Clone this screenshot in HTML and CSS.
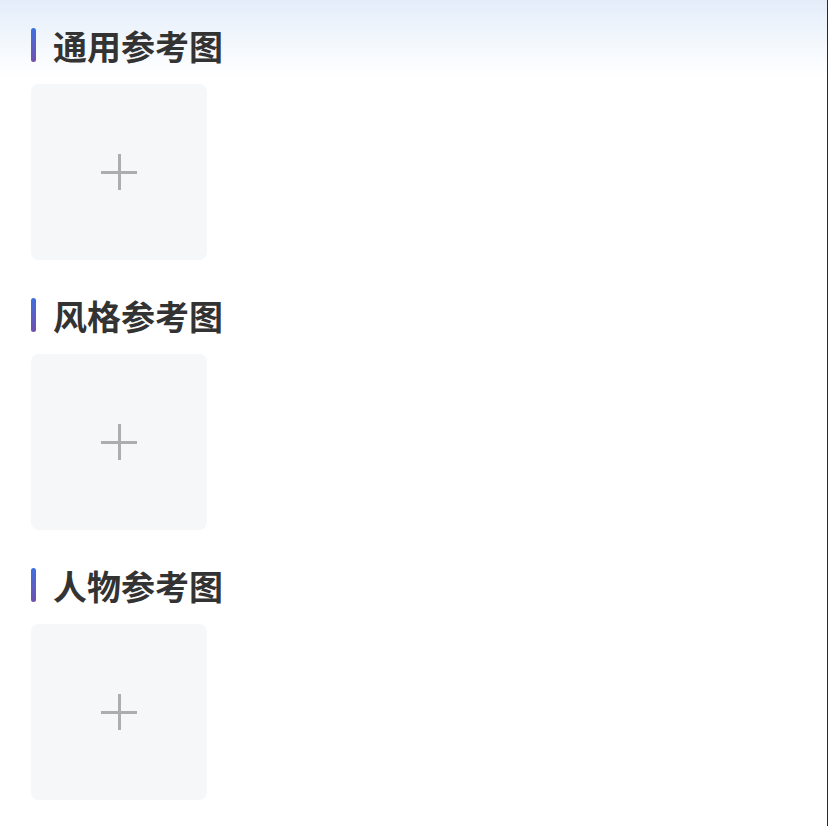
FILE: index.html
```html
<!DOCTYPE html>
<html lang="zh-CN">
<head>
<meta charset="utf-8">
<link rel="stylesheet" href="styles.css">
</head>
<body>
<div class="page">
  <section class="group">
    <h2 class="title"><span class="bar"></span><span class="label">通用参考图</span></h2>
    <div class="upload"><span class="plus"></span></div>
  </section>
  <section class="group">
    <h2 class="title"><span class="bar"></span><span class="label">风格参考图</span></h2>
    <div class="upload"><span class="plus"></span></div>
  </section>
  <section class="group">
    <h2 class="title"><span class="bar"></span><span class="label">人物参考图</span></h2>
    <div class="upload"><span class="plus"></span></div>
  </section>
</div>
</body>
</html>
```
FILE: styles.css
```css
html, body {
  margin: 0;
  padding: 0;
  background: #ffffff;
}
.page {
  width: 828px;
  min-height: 826px;
  box-sizing: border-box;
  border-right: 1px solid #2a2a2a;
  padding: 28px 0 0 31px;
  background: linear-gradient(180deg, #e3edf9 0px, #f4f8fd 45px, #ffffff 78px, #ffffff 100%);
  font-family: "Noto Sans CJK SC", "Noto Sans", sans-serif;
}
.group {
  margin-bottom: 38px;
}
.title {
  display: flex;
  align-items: center;
  gap: 17px;
  height: 34px;
  margin: 0 0 22px 0;
  font-size: 34px;
  font-weight: 700;
  line-height: 34px;
  color: #333333;
}
.label {
  position: relative;
  top: 1px;
}
.bar {
  width: 5px;
  height: 34px;
  border-radius: 2.5px;
  background: linear-gradient(180deg, #3c6fe0 0%, #5a5fc8 50%, #6e4fae 100%);
}
.upload {
  width: 176px;
  height: 176px;
  border-radius: 8px;
  background: #f6f7f9;
  display: flex;
  align-items: center;
  justify-content: center;
}
.plus {
  position: relative;
  width: 36px;
  height: 36px;
}
.plus::before,
.plus::after {
  content: "";
  position: absolute;
  background: #adadad;
}
.plus::before {
  left: 0;
  top: 17px;
  width: 36px;
  height: 3px;
}
.plus::after {
  left: 17px;
  top: 0;
  width: 3px;
  height: 36px;
}
```
